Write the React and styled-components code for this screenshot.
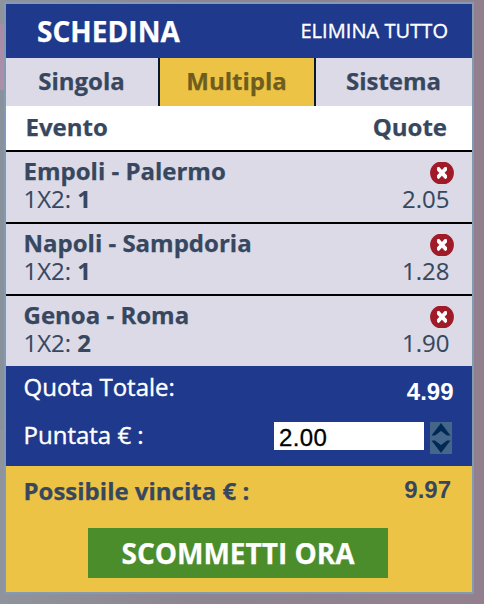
import React from "react";
import styled, { createGlobalStyle } from "styled-components";

const GlobalStyle = createGlobalStyle`
  * { box-sizing: border-box; }
  html, body { margin: 0; height: 100%; }
  body {
    font-family: "Open Sans", sans-serif;
    font-size: 24px;
    line-height: 28px;
    color: #37475f;
    overflow: hidden;
  }
`;

const Page = styled.main`
  width: 484px;
  height: 604px;
  padding: 2px 10px 10px 4px;
  background:
    linear-gradient(90deg, #89929a 0 4px, transparent 4px) 0 90px / 4px 340px no-repeat,
    linear-gradient(#ab8aa7, #ab90aa) 0 24px / 4px 66px no-repeat,
    linear-gradient(90deg, #8f939c, #8d8592 40%, #93808e);
`;

const Slip = styled.section`
  width: 470px;
  height: 592px;
  border: 2px solid #849ab2;
  display: flex;
  flex-direction: column;
  -webkit-text-stroke: 0.25px currentColor;
`;

const Header = styled.header`
  height: 54px;
  padding: 0 24px 0 31px;
  display: flex;
  justify-content: space-between;
  background: #1f398d;
  color: #fff;
`;

const Title = styled.h1`
  margin: 0;
  font-size: 28px;
  line-height: 54px;
  font-weight: 700;
  letter-spacing: 0.05px;
`;

const ClearButton = styled.button`
  border: 0;
  padding: 0;
  background: none;
  color: inherit;
  font: 400 20px/52px "Open Sans", sans-serif;
  height: 54px;
  letter-spacing: 0.06px;
  -webkit-text-stroke: 0.35px currentColor;
`;

const Tabs = styled.nav`
  display: grid;
  grid-template-columns: 152px 158px 156px;
  height: 48px;
`;

const Tab = styled.button`
  border: solid #06192f;
  border-width: ${(p) => (p.$active ? "0 2px" : "0")};
  padding: 0 1px 2px 0;
  background: ${(p) => (p.$active ? "#edc345" : "#dcdae6")};
  color: ${(p) => (p.$active ? "#6e5d1e" : "#37475f")};
  font: 700 24px/46px "Open Sans", sans-serif;
`;

const Columns = styled.div`
  height: 46px;
  padding: 0 25px 0 19.5px;
  display: flex;
  justify-content: space-between;
  background: #fff;
  border-bottom: 2px solid #000;
  font-weight: 700;
  line-height: 42px;
`;

const Bet = styled.article`
  height: ${(p) => (p.$last ? "70px" : "72px")};
  padding: 5px 18px 0;
  display: flex;
  justify-content: space-between;
  background: #dcdae6;
  border-bottom: ${(p) => (p.$last ? "0" : "2px solid #000")};
`;

const BetInfo = styled.div`
  margin-left: -0.5px;
`;

const BetName = styled.div`
  font-weight: 700;
`;

const Pick = styled.div`
  -webkit-text-stroke: 0.1px currentColor;
`;

const Odds = styled.div`
  display: flex;
  flex-direction: column;
  align-items: flex-end;
`;

const RemoveButton = styled.button`
  border: 0;
  padding: 5px 0 1px;
  height: 28px;
  background: none;
  svg { display: block; }
`;

const OddsValue = styled.span`
  padding-right: 4.5px;
  -webkit-text-stroke: 0.1px currentColor;
`;

const Stake = styled.section`
  height: 100px;
  padding: 7px 20px 0 17.5px;
  background: #1f398d;
  color: #fff;
  -webkit-text-stroke: 0.4px currentColor;
`;

const Line = styled.div`
  display: flex;
  justify-content: space-between;
  height: 48px;
`;

const Total = styled.strong`
  font-family: "Liberation Sans", Arial, sans-serif;
  font-weight: 700;
  line-height: ${(p) => p.$leading};
  margin-right: ${(p) => p.$inset};
  -webkit-text-stroke: 0;
`;

const StakeControls = styled.div`
  display: flex;
  gap: 6px;
  padding-top: 1px;
`;

const StakeInput = styled.input`
  width: 150px;
  height: 28px;
  border: 0;
  border-radius: 0;
  padding: 3px 0 0 5px;
  background: #fff;
  color: #000;
  font: 400 24px/25px "Liberation Sans", Arial, sans-serif;
  letter-spacing: 0.4px;
  -webkit-text-stroke: 0.3px currentColor;
`;

const Stepper = styled.button`
  width: 22px;
  height: 32px;
  border: 0;
  padding: 0;
  background: #44668a;
  svg { display: block; }
`;

const Payout = styled.section`
  flex: 1;
  padding: 11px 18px 0 17.5px;
  background: #edc345;
  display: flex;
  flex-direction: column;
`;

const PayoutLine = styled.div`
  display: flex;
  justify-content: space-between;
  height: 51px;
  font-weight: 700;
`;

const BetButton = styled.button`
  width: 300px;
  height: 50px;
  margin-left: 64.5px;
  border: 0;
  padding: 0;
  background: #4c8d2b;
  color: #fff;
  font: 700 28px/50px "Open Sans", sans-serif;
`;

const bets = [
  { name: "Empoli - Palermo", pick: "1", odds: "2.05" },
  { name: "Napoli - Sampdoria", pick: "1", odds: "1.28" },
  { name: "Genoa - Roma", pick: "2", odds: "1.90" },
];

function RemoveIcon() {
  return (
    <svg width="24" height="22" viewBox="0 0 24 22">
      <defs>
        <filter id="soften" x="-20%" y="-20%" width="140%" height="140%">
          <feGaussianBlur stdDeviation="0.6" />
        </filter>
      </defs>
      <ellipse cx="12" cy="11" rx="11.9" ry="11.6" fill="#a01a28" />
      <path
        d="M8.5 7L15.5 14.6M15.5 7L8.5 14.6"
        stroke="#fff"
        strokeWidth="3.9"
        strokeLinecap="square"
        filter="url(#soften)"
      />
    </svg>
  );
}

function StepperIcon() {
  return (
    <svg width="22" height="32" viewBox="0 0 22 32">
      <defs>
        <filter id="softArrow">
          <feGaussianBlur stdDeviation="0.5" />
        </filter>
      </defs>
      <g fill="#062a55" filter="url(#softArrow)">
        <path d="M11 1L20.5 13.5H17L11 9L5 13.5H1.5Z" />
        <path d="M11 31L20.5 18.5H17L11 23L5 18.5H1.5Z" />
      </g>
    </svg>
  );
}

export default function App() {
  return (
    <Page>
      <GlobalStyle />
      <Slip>
        <Header>
          <Title>SCHEDINA</Title>
          <ClearButton>ELIMINA TUTTO</ClearButton>
        </Header>
        <Tabs>
          <Tab>Singola</Tab>
          <Tab $active>Multipla</Tab>
          <Tab>Sistema</Tab>
        </Tabs>
        <Columns>
          <span>Evento</span>
          <span>Quote</span>
        </Columns>
        {bets.map((bet, i) => (
          <Bet key={bet.name} $last={i === bets.length - 1}>
            <BetInfo>
              <BetName>{bet.name}</BetName>
              <Pick>1X2: <b>{bet.pick}</b></Pick>
            </BetInfo>
            <Odds>
              <RemoveButton aria-label="Rimuovi"><RemoveIcon /></RemoveButton>
              <OddsValue>{bet.odds}</OddsValue>
            </Odds>
          </Bet>
        ))}
        <Stake>
          <Line>
            <span>Quota Totale:</span>
            <Total $leading="38px" $inset="-1.5px">4.99</Total>
          </Line>
          <Line>
            <span>Puntata € :</span>
            <StakeControls>
              <StakeInput defaultValue="2.00" />
              <Stepper aria-label="Modifica puntata"><StepperIcon /></Stepper>
            </StakeControls>
          </Line>
        </Stake>
        <Payout>
          <PayoutLine>
            <span>Possibile vincita € :</span>
            <Total $leading="26px" $inset="3px">9.97</Total>
          </PayoutLine>
          <BetButton>SCOMMETTI ORA</BetButton>
        </Payout>
      </Slip>
    </Page>
  );
}
